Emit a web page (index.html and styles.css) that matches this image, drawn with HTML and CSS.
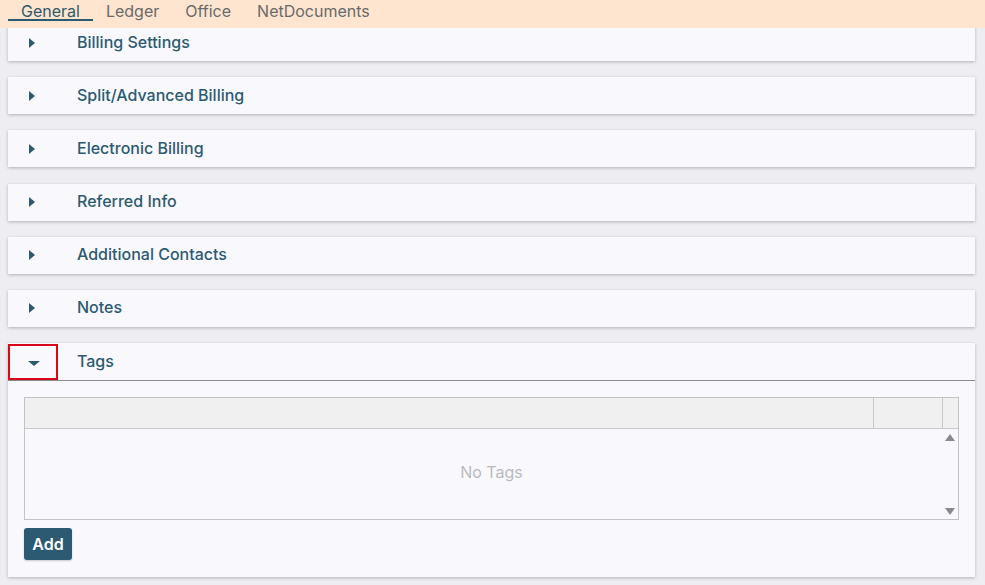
FILE: index.html
```html
<!DOCTYPE html>
<html lang="en">
<head>
    <meta charset="UTF-8">
    <meta name="viewport" content="width=device-width, initial-scale=1.0">
    <title>Matter - General</title>
    <link rel="stylesheet" href="styles.css">
</head>
<body>
    <nav class="tabs">
        <span class="tab active">General</span>
        <span class="tab">Ledger</span>
        <span class="tab">Office</span>
        <span class="tab">NetDocuments</span>
    </nav>

    <div class="panels">
        <div class="panel">
            <div class="panel-header">
                <span class="toggle"><span class="arrow-right"></span></span>
                <span class="panel-title">Billing Settings</span>
            </div>
        </div>
        <div class="panel">
            <div class="panel-header">
                <span class="toggle"><span class="arrow-right"></span></span>
                <span class="panel-title">Split/Advanced Billing</span>
            </div>
        </div>
        <div class="panel">
            <div class="panel-header">
                <span class="toggle"><span class="arrow-right"></span></span>
                <span class="panel-title">Electronic Billing</span>
            </div>
        </div>
        <div class="panel">
            <div class="panel-header">
                <span class="toggle"><span class="arrow-right"></span></span>
                <span class="panel-title">Referred Info</span>
            </div>
        </div>
        <div class="panel">
            <div class="panel-header">
                <span class="toggle"><span class="arrow-right"></span></span>
                <span class="panel-title">Additional Contacts</span>
            </div>
        </div>
        <div class="panel">
            <div class="panel-header">
                <span class="toggle"><span class="arrow-right"></span></span>
                <span class="panel-title">Notes</span>
            </div>
        </div>
        <div class="panel open">
            <div class="panel-header">
                <span class="toggle focused"><span class="arrow-down"></span></span>
                <span class="panel-title">Tags</span>
            </div>
            <div class="panel-body">
                <div class="grid">
                    <div class="grid-head">
                        <div class="col-main"></div>
                        <div class="col-side"></div>
                        <div class="col-scroll"></div>
                    </div>
                    <div class="grid-body">
                        <div class="empty">No Tags</div>
                        <div class="scrollbar">
                            <span class="scroll-up"></span>
                            <span class="scroll-down"></span>
                        </div>
                    </div>
                </div>
                <button class="btn-add">Add</button>
            </div>
        </div>
    </div>
</body>
</html>
```

FILE: styles.css
```css
body {
    margin: 0;
    padding: 0;
    font-family: Inter, "Noto Sans", Arial, sans-serif;
    background-color: #eeeef2;
    height: 585px;
    overflow: hidden;
}
.tabs {
    position: relative;
    z-index: 2;
    height: 28px;
    background: #fde5cf;
    display: flex;
    padding-left: 8px;
    box-sizing: border-box;
}
.tab {
    font-size: 16px;
    color: #6a6a6a;
    padding: 3px 13px 0 13px;
    height: 19px;
    line-height: 17px;
}
.tab.active {
    color: #2d5a70;
    border-bottom: 2px solid #2d5a70;
    height: 16px;
}
.panels {
    margin-top: -4px;
    padding: 0 10px 0 8px;
    display: flex;
    flex-direction: column;
    gap: 16.2px;
}
.panel {
    background: #f9f9fd;
    box-shadow: 0 1px 3px rgba(0, 0, 0, 0.25);
}
.panel-header {
    height: 37px;
    display: flex;
    align-items: center;
}
.panel.open .panel-header {
    border-bottom: 1px solid #8a8a8e;
}
.toggle {
    width: 50px;
    height: 37px;
    box-sizing: border-box;
    display: flex;
    align-items: center;
    padding-left: 21px;
}
.toggle.focused {
    border: 2px solid #d7061d;
    height: 36px;
    padding-left: 18px;
    margin-top: 1px;
}
.arrow-right {
    width: 0;
    height: 0;
    border-top: 5px solid transparent;
    border-bottom: 5px solid transparent;
    border-left: 6px solid #2b5970;
}
.arrow-down {
    width: 0;
    height: 0;
    border-left: 6px solid transparent;
    border-right: 6px solid transparent;
    border-top: 5px solid #2b5970;
    margin-top: 2px;
}
.panel-title {
    margin-left: 19px;
    font-size: 16px;
    font-weight: 500;
    color: #2d5a70;
    padding-bottom: 2px;
}
.panel-body {
    padding: 16px 16px 17px 16px;
}
.grid {
    border: 1px solid #c3c3c6;
    width: 935px;
    box-sizing: border-box;
}
.grid-head {
    display: flex;
    height: 30px;
    background: #f0f0f0;
    border-bottom: 1px solid #c8c8ca;
}
.col-main {
    flex: 1;
    border-right: 1px solid #c8c8ca;
}
.col-side {
    width: 68px;
    border-right: 1px solid #c8c8ca;
}
.col-scroll {
    width: 15px;
}
.grid-body {
    height: 90px;
    display: flex;
}
.empty {
    flex: 1;
    display: flex;
    align-items: center;
    justify-content: center;
    color: #b9b9bd;
    font-size: 16px;
    padding-left: 16px;
    padding-bottom: 4px;
}
.scrollbar {
    width: 16px;
    display: flex;
    flex-direction: column;
    justify-content: space-between;
    align-items: center;
    padding: 5px 0 4px 0;
}
.scroll-up {
    width: 0;
    height: 0;
    border-left: 5px solid transparent;
    border-right: 5px solid transparent;
    border-bottom: 7px solid #8a8a8a;
}
.scroll-down {
    width: 0;
    height: 0;
    border-left: 5px solid transparent;
    border-right: 5px solid transparent;
    border-top: 7px solid #8a8a8a;
}
.btn-add {
    margin-top: 8px;
    background: #2b5a72;
    color: #fff;
    border: none;
    border-radius: 3px;
    font-family: inherit;
    font-size: 16px;
    font-weight: 600;
    height: 32px;
    width: 48px;
    padding: 0;
    box-shadow: 0 1px 2px rgba(0, 0, 0, 0.2);
    display: block;
}
```
